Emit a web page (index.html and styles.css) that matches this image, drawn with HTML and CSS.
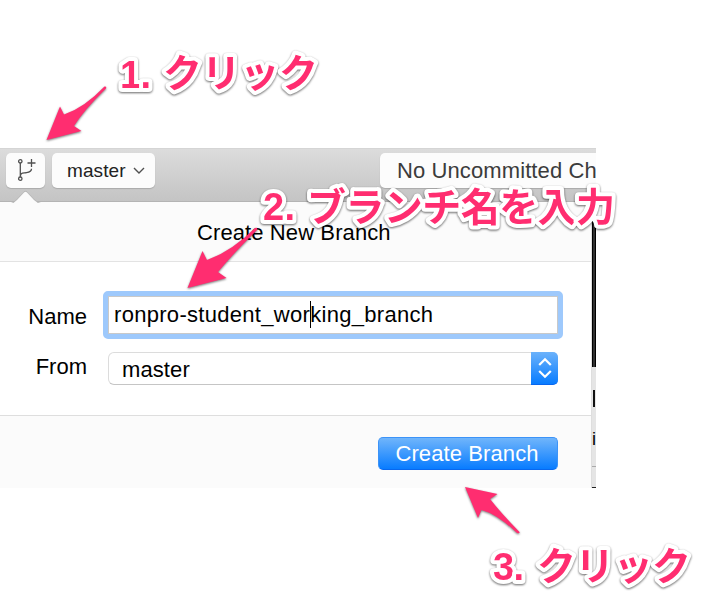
FILE: index.html
```html
<!DOCTYPE html>
<html lang="ja">
<head>
<meta charset="utf-8">
<title>Create New Branch</title>
<link rel="stylesheet" href="styles.css">
</head>
<body>
<main class="window">
  <header class="toolbar">
    <button class="tool branch" aria-label="New branch">
      <svg width="20" height="26" viewBox="0 0 20 26" fill="none" stroke="#505050" stroke-width="1.3"><circle cx="3.3" cy="4.3" r="1.7"/><circle cx="3.3" cy="21.7" r="1.7"/><path d="M3.3 6v14M3.3 19.5C3.7 15.2 6 16.3 9.5 15.7C12.500 15.2 14.500 14.500 14.500 11.800M14.500 2v8M10.500 6h8"/></svg>
    </button>
    <button class="tool current"><span>master</span><svg width="12" height="8" viewBox="0 0 12 8" fill="none" stroke="#505050" stroke-width="1.4"><path d="M1 1l5 5 5-5"/></svg></button>
    <div class="tool status">No Uncommitted Ch</div>
  </header>
  <div class="body">
    <section class="popover">
      <h1 class="title">Create New Branch</h1>
      <div class="form">
        <div class="label name">Name</div>
        <div class="field">ronpro-student_wor<i class="caret"></i>king_branch</div>
        <div class="label from">From</div>
        <div class="select"><span>master</span><div class="stepper"><svg width="14" height="22" viewBox="0 0 14 22" fill="none" stroke="#fff" stroke-width="2.2"><path d="M1.2 8L7 2.2 12.8 8M1.2 14L7 19.8 12.8 14"/></svg></div></div>
      </div>
      <footer class="footer"><button class="create">Create Branch</button></footer>
    </section>
    <aside class="edge"><div class="dark"></div><div class="light"><b class="l1"></b><b class="l2">i</b><b class="l3"></b></div></aside>
  </div>
  <svg class="pointer" width="30" height="13" viewBox="0 0 30 13"><path d="M0 13Q3 12 6 9L13 1.5Q14.5 0 16 1.5L23 9Q26 12 30 13Z" fill="#fbfbfb"/></svg>
</main>
<svg class="notes" width="710" height="600" viewBox="0 0 710 600">
  <g class="arrows">
    <path d="M46.500 140L60 106.500L64 114.500Q84 108 104.500 86.500Q107 86 106 88.500Q84 110 74 126L81.500 131Z"/>
    <path d="M187.500 288L202.500 251L207 260Q232 251 255 228Q258 227 257 230Q232 255 218 272L226.500 278Z"/>
    <path d="M465 487L497.500 494L490 499Q501 513 519.500 532Q520 534 517 533Q497 514 481.500 510L478 518Z"/>
  </g>
  <g class="words">
    <text class="num" x="120" y="87.500" textLength="31">1.</text>
    <text class="jp" x="163" y="87" textLength="155">クリック</text>
    <text class="num" x="263" y="220" textLength="32">2.</text>
    <text class="jp" x="307" y="221" textLength="308">ブランチ名を入力</text>
    <text class="num" x="493" y="579.500" textLength="31">3.</text>
    <text class="jp" x="537" y="579.500" textLength="154">クリック</text>
  </g>
</svg>
</body>
</html>
```
FILE: styles.css
```css
* { box-sizing: border-box; }
body { margin: 0; padding-top: 148px; height: 600px; background: #fff; overflow: hidden; color: #000; font: 22px "Liberation Sans", "Noto Sans CJK JP", sans-serif; }
button { font: inherit; border: 0; padding: 0; }
.window { position: relative; width: 596px; height: 340px; overflow: hidden; }
.toolbar { height: 54px; padding: 4px 0 0 6px; display: flex; background: linear-gradient(#dcdcdc, #c4c4c4); border-top: 1px solid #d5d5d5; border-bottom: 1px solid #b4b4b4; }
.tool { height: 35px; background: #fcfcfc; border-radius: 5px; box-shadow: 0 1px 1px #aaa; display: flex; align-items: center; flex: none; }
.branch { width: 39px; padding-left: 11px; padding-bottom: 2px; }
.current { width: 103px; margin-left: 7px; padding-left: 15px; gap: 7px; font-size: 19px; letter-spacing: .1px; color: #222; }
.status { width: 260px; margin-left: 225px; padding-left: 17px; color: #3b3b3b; white-space: nowrap; letter-spacing: .1px; }
.body { height: 286px; display: flex; }
.popover { width: 592px; background: #fff; border-right: 1px solid #dedede; border-top-left-radius: 5px; }
.title { height: 60px; margin: 0; padding-left: 197px; background: #fbfbfb; border-bottom: 1px solid #e3e3e3; font-size: 22px; line-height: 62px; font-weight: 400; letter-spacing: .1px; }
.form { height: 153px; padding-top: 29px; display: grid; grid-template-columns: 87px 460px; grid-template-rows: 48px 48px; column-gap: 16px; }
.label { text-align: right; line-height: 52px; }
.from { line-height: 56px; }
.field { height: 48px; border: 5px solid #9ec9fc; border-radius: 5px; box-shadow: inset 0 0 0 1px #c9c9c9; padding-left: 6px; line-height: 38px; letter-spacing: .3px; white-space: nowrap; }
.caret { display: inline-block; width: 1px; margin-right: -1px; height: 27px; background: #000; vertical-align: -6px; }
.select { width: 450px; height: 33px; margin: 13px 0 0 5px; padding-left: 13px; border: 1px solid #dcdcdc; border-bottom-color: #c5c5c5; border-radius: 6px; display: flex; justify-content: space-between; line-height: 33px; letter-spacing: .1px; }
.stepper { width: 27px; height: 33px; margin: -1px -1px 0 0; border-radius: 0 5px 5px 0; background: linear-gradient(#6bb2fb, #087cff); border-bottom: 1px solid #0866ef; display: grid; place-items: center; }
.footer { height: 73px; padding: 21px 0 0 378px; background: #fbfbfb; border-top: 1px solid #dedede; }
.create { display: block; width: 180px; height: 33px; padding-right: 2px; color: #fff; border-radius: 5px; letter-spacing: .1px; background: linear-gradient(#70b5fb, #087cff); border: 1px solid #3c93f8; border-bottom-color: #0868ef; }
.edge { width: 4px; }
.dark { height: 165px; background: #303030; border-left: 1px solid #000; border-right: 1px solid #000; }
.light { height: 121px; background: #e5e5e5; padding-top: 23px; overflow: hidden; border-bottom: 1px solid #222; }
.light b { display: block; }
.l1 { width: 2px; height: 17px; margin-left: 1px; background: #111; }
.l2 { height: 40px; padding-top: 18px; font-size: 18px; font-weight: 400; line-height: 28px; }
.l3 { margin-top: 19px; height: 1px; background: #aaa; }
.pointer { position: absolute; left: 11px; top: 43px; filter: drop-shadow(0 -1px 0 #b5b5b5); }
.notes { position: absolute; left: 0; top: 0; }
.arrows { fill: #ff2d70; filter: drop-shadow(0 1px 1px #0008); }
.words { fill: #ff2d70; stroke: #fff; stroke-width: 8px; stroke-linejoin: round; paint-order: stroke; filter: drop-shadow(0 1px 1px #0009); }
.num { font: 700 38px "Liberation Sans", sans-serif; }
.jp { font: 700 39px "Noto Sans CJK JP", sans-serif; }
```
